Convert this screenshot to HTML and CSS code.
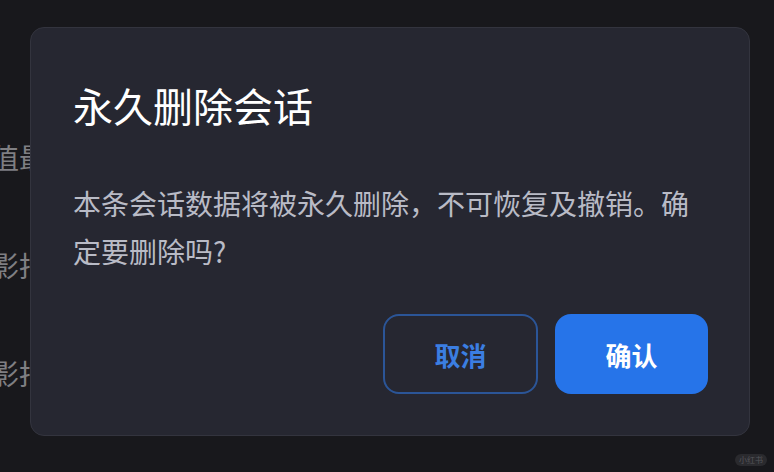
FILE: index.html
```html
<!DOCTYPE html>
<html lang="zh-CN">
<head>
    <meta charset="UTF-8">
    <meta name="viewport" content="width=device-width, initial-scale=1.0">
    <title>删除会话</title>
    <link rel="stylesheet" href="styles.css">
</head>
<body>

    <!-- 背后的会话列表 -->
    <div class="chat-list">
        <div class="chat-item">值最新</div>
        <div class="chat-item">影拍摄</div>
        <div class="chat-item">影拍摄</div>
    </div>

    <div class="overlay">
        <div class="dialog">
            <h2 class="dialog-title">永久删除会话</h2>
            <p class="dialog-text">本条会话数据将被永久删除，不可恢复及撤销。确定要删除吗?</p>
            <div class="dialog-actions">
                <button class="btn btn-cancel">取消</button>
                <button class="btn btn-ok">确认</button>
            </div>
        </div>
    </div>

    <div class="watermark">小红书</div>

</body>
</html>
```

FILE: styles.css
```css
body {
    margin: 0;
    height: 472px;
    background-color: #18181c;
    font-family: "Noto Sans CJK SC", "Noto Sans", sans-serif;
    overflow: hidden;
    position: relative;
}

.chat-list {
    display: flex;
    flex-direction: column;
    gap: 76px;
    padding-top: 141px;
    margin-left: -9px;
}

.chat-item {
    font-size: 28px;
    line-height: 32px;
    color: #7f7f83;
    white-space: nowrap;
}

/* 弹窗遮罩 */
.overlay {
    position: absolute;
    top: 27px;
    left: 30px;
}

.dialog {
    width: 720px;
    height: 409px;
    box-sizing: border-box;
    background-color: #262731;
    border: 1px solid #33343e;
    border-radius: 14px;
    padding: 0 41px 0 42px;
    display: flex;
    flex-direction: column;
}

.dialog-title {
    margin: 51px 0 0;
    font-size: 40px;
    line-height: 52px;
    font-weight: 400;
    color: #ffffff;
}

.dialog-text {
    margin: 48px 0 0;
    font-size: 28px;
    line-height: 48px;
    color: #b9bbc6;
    width: 632px;
}

.dialog-actions {
    display: flex;
    justify-content: flex-end;
    gap: 17px;
    margin-top: 39px;
}

.btn {
    width: 155px;
    height: 80px;
    border-radius: 16px;
    font-family: "Noto Sans CJK SC", sans-serif;
    font-size: 26px;
    font-weight: bold;
    box-sizing: border-box;
}

.btn-cancel {
    background-color: transparent;
    border: 2px solid #2b5597;
    color: #3b7ee2;
}

.btn-ok {
    width: 153px;
    background-color: #2674e9;
    border: none;
    color: #ffffff;
}

.watermark {
    position: absolute;
    right: 7px;
    bottom: 6px;
    font-size: 8px;
    line-height: 12px;
    padding: 0 4px;
    border-radius: 6px;
    background-color: #2a2a2e;
    color: #55555a;
}
```
